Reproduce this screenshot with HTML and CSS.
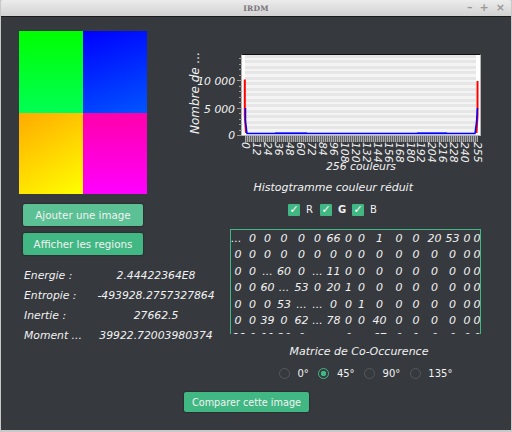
FILE: index.html
```html
<!DOCTYPE html>
<html lang="fr">
<head>
    <meta charset="UTF-8">
    <title>IRDM</title>
    <link rel="stylesheet" href="styles.css">
</head>
<body>
    <div class="window">
        <div class="titlebar">
            <span class="title">IRDM</span>
            <div class="win-buttons"><span>–</span><span>+</span><span>×</span></div>
        </div>
        <div class="content">
            <div class="left">
                <div class="picture">
                    <div class="quad q-green"></div>
                    <div class="quad q-blue"></div>
                    <div class="quad q-orange"></div>
                    <div class="quad q-pink"></div>
                </div>
                <button class="btn btn-hover">Ajouter une image</button>
                <button class="btn">Afficher les regions</button>
                <div class="stats">
                    <div class="stat"><span class="stat-name">Energie :</span><span class="stat-value">2.44422364E8</span></div>
                    <div class="stat"><span class="stat-name">Entropie :</span><span class="stat-value">-493928.2757327864</span></div>
                    <div class="stat"><span class="stat-name">Inertie :</span><span class="stat-value">27662.5</span></div>
                    <div class="stat"><span class="stat-name">Moment ...</span><span class="stat-value">39922.72003980374</span></div>
                </div>
            </div>
            <div class="right">
                <div class="chart">
                    <div class="y-title">Nombre de ...</div>
                    <div class="plot">
                        <span class="y-label y-10000">10 000</span>
                        <span class="y-label y-5000">5 000</span>
                        <span class="y-label y-0">0</span>
                        <div class="y-ticks"></div>
                        <svg class="series" width="240" height="82" viewBox="0 0 240 82">
                            <path d="M3.8 25.5V62L5 79" fill="none" stroke="#f00" stroke-width="2"/>
                            <path d="M236.5 27V62L235.5 79" fill="none" stroke="#f00" stroke-width="2"/>
                            <path d="M4.5 54V68L6 79.5H234L235.5 68L236.5 54" fill="none" stroke="#00f" stroke-width="1.5"/>
                            <path d="M34 79H66M176 79H206" fill="none" stroke="#00f" stroke-width="1"/>
                        </svg>
                    </div>
                    <div class="x-ticks"></div>
                    <div class="x-labels">
                        <span>0</span><span>12</span><span>24</span><span>36</span><span>48</span><span>60</span>
                        <span>72</span><span>84</span><span>96</span><span>108</span><span>120</span><span>132</span>
                        <span>144</span><span>156</span><span>168</span><span>180</span><span>192</span><span>204</span>
                        <span>216</span><span>228</span><span>240</span><span>255</span>
                    </div>
                    <div class="x-title">256 couleurs</div>
                </div>
                <div class="histo-title">Histogtramme couleur réduit</div>
                <div class="checks">
                    <label class="check"><span class="box">✓</span>R</label>
                    <label class="check check-bold"><span class="box">✓</span>G</label>
                    <label class="check"><span class="box">✓</span>B</label>
                </div>
                <div class="matrix">
                    <span class="corner">...</span><span>0</span><span>0</span><span>0</span><span>0</span><span>0</span><span>66</span><span>0</span><span>0</span><span>1</span><span>0</span><span>0</span><span>20</span><span>53</span><span>0</span><span>0</span>
                    <span>0</span><span>0</span><span>0</span><span>0</span><span>0</span><span>0</span><span>0</span><span>0</span><span>0</span><span>0</span><span>0</span><span>0</span><span>0</span><span>0</span><span>0</span><span>0</span>
                    <span>0</span><span>0</span><span>...</span><span>60</span><span>0</span><span>...</span><span>11</span><span>0</span><span>0</span><span>0</span><span>0</span><span>0</span><span>0</span><span>0</span><span>0</span><span>0</span>
                    <span>0</span><span>0</span><span>60</span><span>...</span><span>53</span><span>0</span><span>20</span><span>1</span><span>0</span><span>0</span><span>0</span><span>0</span><span>0</span><span>0</span><span>0</span><span>0</span>
                    <span>0</span><span>0</span><span>0</span><span>53</span><span>...</span><span>...</span><span>0</span><span>0</span><span>1</span><span>0</span><span>0</span><span>0</span><span>0</span><span>0</span><span>0</span><span>0</span>
                    <span>0</span><span>0</span><span>39</span><span>0</span><span>62</span><span>...</span><span>78</span><span>0</span><span>0</span><span>40</span><span>0</span><span>0</span><span>0</span><span>0</span><span>0</span><span>0</span>
                    <span>66</span><span>0</span><span>11</span><span>20</span><span>0</span><span>...</span><span>...</span><span>0</span><span>...</span><span>67</span><span>0</span><span>1</span><span>0</span><span>0</span><span>0</span><span>0</span>
                </div>
                <div class="matrix-title">Matrice de Co-Occurence</div>
                <div class="radios">
                    <label class="radio"><span class="dot"></span>0°</label>
                    <label class="radio"><span class="dot dot-on"></span>45°</label>
                    <label class="radio"><span class="dot"></span>90°</label>
                    <label class="radio"><span class="dot"></span>135°</label>
                </div>
            </div>
        </div>
        <div class="bottom">
            <button class="btn btn-compare">Comparer cette image</button>
        </div>
    </div>
</body>
</html>
```

FILE: styles.css
```css
* {
    box-sizing: border-box;
}
body {
    margin: 0;
    background: #c9c9c9;
    font-family: "DejaVu Sans", sans-serif;
    font-size: 11px;
    color: #f2f2f2;
}
.window {
    width: 512px;
    height: 432px;
    padding: 0 1px 2px 1px;
    overflow: hidden;
    border-radius: 4px 4px 0 0;
}
.titlebar {
    position: relative;
    display: flex;
    justify-content: center;
    align-items: center;
    height: 17px;
    background: linear-gradient(#ececec, #d2d2d2);
    border-bottom: 1px solid #1c1c1c;
    color: #777;
}
.title {
    font-family: "DejaVu Serif", serif;
    font-size: 7.5px;
    font-weight: bold;
    letter-spacing: 0.3px;
}
.win-buttons {
    position: absolute;
    right: 6px;
    top: 0;
    display: flex;
    gap: 7px;
    font-size: 11px;
    line-height: 16px;
    font-weight: bold;
    color: #999;
}
.content {
    display: flex;
    height: 375px;
    background: #36393e;
}
.left {
    width: 229px;
    padding: 14px 0 0 18px;
}
.picture {
    display: grid;
    grid-template-columns: 64px 64px;
    grid-template-rows: 82px 81px;
    width: 128px;
    height: 163px;
}
.q-green {
    background: linear-gradient(#00ff00, #00ff55);
}
.q-blue {
    background: linear-gradient(160deg, #0000ff, #0055ff);
}
.q-orange {
    background: linear-gradient(150deg, #ffaa00, #ffff00);
}
.q-pink {
    background: linear-gradient(#ff00aa, #ff00ff);
}
.btn {
    display: block;
    width: 120px;
    height: 22px;
    margin: 7px 0 0 4px;
    padding: 0;
    background: #41b883;
    border: 0;
    border-radius: 2px;
    box-shadow: 0 0 2px #15171a;
    font-family: inherit;
    font-size: 10.3px;
    color: #f2f2f2;
}
.btn-hover {
    margin-top: 10px;
    background: #5cc095;
}
.stats {
    margin: 10px 0 0 5px;
    font-size: 10.8px;
    font-style: italic;
}
.stat {
    display: flex;
    height: 20px;
    align-items: center;
}
.stat-name {
    width: 68px;
    white-space: nowrap;
}
.stat-value {
    width: 128px;
    text-align: center;
    white-space: nowrap;
}
.right {
    width: 281px;
    padding-top: 37px;
}
.chart {
    position: relative;
    width: 250px;
}
.y-title {
    position: absolute;
    left: -42px;
    top: 0;
    height: 80px;
    writing-mode: vertical-rl;
    transform: rotate(180deg);
    text-align: center;
    font-size: 12px;
    font-style: italic;
    line-height: 14px;
    white-space: nowrap;
}
.plot {
    position: relative;
    width: 240px;
    height: 82px;
    margin-left: 11px;
    padding: 0 4px 2px 3px;
    border: 1px solid #b5b5b5;
    border-top-color: #111;
    background: repeating-linear-gradient(#e6e6e6 0 2.75px, #f4f4f4 2.75px 5.5px) content-box, #fff;
}
.series {
    position: absolute;
    left: -1px;
    top: -1px;
}
.y-label {
    position: absolute;
    right: 245px;
    font-size: 10.8px;
    font-style: italic;
    line-height: 12px;
    white-space: nowrap;
}
.y-10000 {
    top: 21px;
}
.y-5000 {
    top: 49px;
}
.y-0 {
    top: 75px;
}
.y-ticks {
    position: absolute;
    right: 100%;
    top: 3px;
    width: 5px;
    height: 78px;
    background:
        repeating-linear-gradient(to top, #9a9a9a 0 1px, transparent 1px 5.5px) right / 3px 100% no-repeat,
        repeating-linear-gradient(to top, #9a9a9a 0 1px, transparent 1px 27.4px) right / 5px 100% no-repeat;
}
.x-ticks {
    width: 233px;
    height: 6px;
    margin-left: 15px;
    background: repeating-linear-gradient(to right, #a8a8a8 0 1px, #606266 1px 2px);
}
.x-labels {
    display: grid;
    grid-template-columns: repeat(21, 10.95px) 14px;
    justify-items: center;
    height: 18px;
    margin-left: 10px;
    font-size: 10.8px;
    line-height: 12px;
}
.x-labels span {
    writing-mode: vertical-rl;
    font-style: italic;
    white-space: nowrap;
}
.x-title {
    margin: 0 0 0 11px;
    height: 14px;
    width: 240px;
    text-align: center;
    font-style: italic;
    font-size: 10.8px;
    line-height: 14px;
}
.histo-title {
    width: 208px;
    margin: 7px 0 0 0;
    text-align: right;
    padding-right: 25px;
    font-style: italic;
    white-space: nowrap;
    line-height: 14px;
}
.checks {
    display: flex;
    gap: 8px;
    margin: 8px 0 0 58px;
    height: 13px;
    font-size: 10px;
}
.check {
    display: flex;
    align-items: center;
    gap: 6px;
    width: 24px;
    white-space: nowrap;
}
.check-bold {
    font-weight: bold;
}
.box {
    display: block;
    flex: none;
    width: 12px;
    height: 12px;
    background: #41b883;
    border-radius: 1px;
    color: #fff;
    font-size: 11px;
    font-weight: bold;
    line-height: 12px;
    text-align: center;
}
.matrix {
    display: grid;
    grid-template-columns: 14px 15px 15px 18px 17px 15px 17px 13px 13px 23px 16px 18px 19px 17px 12px 8px;
    grid-auto-rows: 16.5px;
    align-items: center;
    justify-items: center;
    width: 251px;
    height: 105px;
    margin-top: 13px;
    overflow: hidden;
    border: 1px solid #41b883;
    border-bottom: 0;
    font-style: italic;
    font-size: 11px;
}
.matrix span {
    white-space: nowrap;
}
.matrix .corner {
    justify-self: start;
}
.matrix-title {
    width: 258px;
    margin-top: 11px;
    text-align: center;
    font-style: italic;
    line-height: 14px;
}
.radios {
    display: flex;
    gap: 9.5px;
    margin: 9px 0 0 49px;
    font-size: 10px;
}
.radio {
    display: flex;
    align-items: center;
    gap: 7.5px;
    white-space: nowrap;
}
.dot {
    display: block;
    width: 11px;
    height: 11px;
    border: 1.5px solid #55585d;
    border-radius: 50%;
}
.dot-on {
    border-color: #41b883;
    background: radial-gradient(#41b883 0 2.5px, transparent 3px);
}
.bottom {
    height: 38px;
    background: #36393e;
    padding-left: 183px;
}
.btn-compare {
    width: 125px;
    height: 20px;
    margin: 0;
    font-size: 9.7px;
}
```
